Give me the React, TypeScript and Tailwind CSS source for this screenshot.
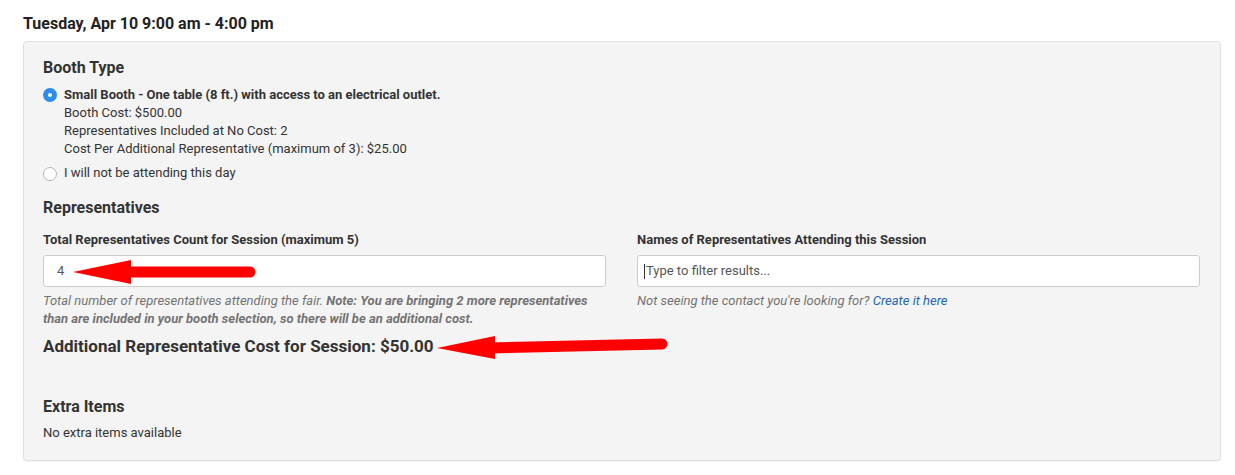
import React from "react";

function Radio({ checked }: { checked?: boolean }) {
  if (checked) {
    return (
      <span className="mt-[2px] flex h-[14px] w-[14px] shrink-0 items-center justify-center rounded-full bg-[#2d8cf0]">
        <span className="h-[4px] w-[4px] rounded-full bg-white" />
      </span>
    );
  }
  return (
    <span className="mt-[3px] h-[14px] w-[14px] shrink-0 rounded-full border border-[#b5b5b5] bg-white" />
  );
}

export default function App() {
  return (
    <div
      className="relative h-[475px] w-[1235px] overflow-hidden bg-white pl-[23px] pr-[14px] pt-[13px] text-[#333]"
      style={{ fontFamily: "Roboto, 'Liberation Sans', sans-serif" }}
    >
      <h1 className="text-[16px] font-bold leading-[22px] text-[#222]">
        Tuesday, Apr 10 9:00 am - 4:00 pm
      </h1>

      <div className="mt-[6px] rounded-[4px] border border-[#e0e0e0] bg-[#f4f4f4] pl-[19px] pr-[20px] pb-[18px] pt-[15px] shadow-[0_1px_1px_rgba(0,0,0,0.05)]">
        <h2 className="text-[16px] font-bold leading-[22px] text-[#333]">Booth Type</h2>

        <div className="mt-[7px] flex gap-[7px] text-[13px] leading-[18px]">
          <Radio checked />
          <div>
            <div className="font-bold">
              Small Booth - One table (8 ft.) with access to an electrical outlet.
            </div>
            <div>Booth Cost: $500.00</div>
            <div>Representatives Included at No Cost: 2</div>
            <div>Cost Per Additional Representative (maximum of 3): $25.00</div>
          </div>
        </div>

        <div className="mt-[6px] flex gap-[7px] text-[13px] leading-[18px]">
          <Radio />
          <div>I will not be attending this day</div>
        </div>

        <h2 className="mt-[15px] text-[16px] font-bold leading-[22px]">Representatives</h2>

        <div className="mt-[12px] grid grid-cols-2 gap-[31px]">
          <div>
            <label className="block text-[13px] font-bold leading-[18px]">
              Total Representatives Count for Session (maximum 5)
            </label>
            <div className="mt-[6px] flex h-[32px] items-center rounded-[3px] border border-[#cccccc] bg-white pl-[13px] text-[13px] text-[#555]">
              4
            </div>
            <p className="mt-[5px] text-[13px] italic leading-[18px] text-[#737373]">
              Total number of representatives attending the fair.{" "}
              <span className="font-bold">
                Note: You are bringing 2 more representatives than are included in your booth selection, so there will be an additional cost.
              </span>
            </p>
          </div>
          <div>
            <label className="block text-[13px] font-bold leading-[18px]">
              Names of Representatives Attending this Session
            </label>
            <div className="mt-[6px] flex h-[32px] items-center rounded-[3px] border border-[#cccccc] bg-white pl-[6px] text-[13px] text-[#555]">
              <span className="mr-[1px] h-[15px] w-[1px] bg-[#333]" />
              <span>Type to filter results...</span>
            </div>
            <p className="mt-[5px] text-[13px] italic leading-[18px] text-[#737373]">
              Not seeing the contact you're looking for?{" "}
              <span className="text-[#2467b3]">Create it here</span>
            </p>
          </div>
        </div>

        <h2 className="mt-[7px] text-[17px] font-bold leading-[22px]">
          Additional Representative Cost for Session: $50.00
        </h2>

        <h2 className="mt-[39px] text-[16px] font-bold leading-[22px]">Extra Items</h2>
        <p className="mt-[6px] text-[13px] leading-[18px]">No extra items available</p>
      </div>

      <svg
        className="pointer-events-none absolute left-0 top-0"
        width="1235"
        height="475"
        viewBox="0 0 1235 475"
      >
        <line x1="128" y1="272" x2="250" y2="272" stroke="#ff0000" strokeWidth="11" strokeLinecap="round" />
        <polygon points="73,272 131,260 131,284" fill="#ff0000" />
        <line x1="490" y1="348" x2="662" y2="344" stroke="#ff0000" strokeWidth="11" strokeLinecap="round" />
        <polygon points="437,348 495,336 495,359" fill="#ff0000" />
      </svg>
    </div>
  );
}
